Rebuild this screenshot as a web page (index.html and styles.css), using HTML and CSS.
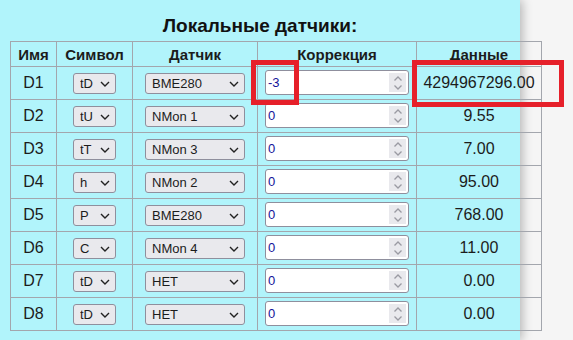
FILE: index.html
```html
<!DOCTYPE html>
<html>

<head>
    <title>Локальные датчики</title>
    <meta charset="utf-8">
    <meta name="viewport" content="width=device-width, initial-scale=1">
    <link rel="stylesheet" href="styles.css">
</head>

<body>
    <div class="panel">
        <h3 class="title">Локальные датчики:</h3>
        <table class="sensors">
            <colgroup>
                <col class="c-name">
                <col class="c-sym">
                <col class="c-sensor">
                <col class="c-corr">
                <col class="c-data">
            </colgroup>
            <tr class="head">
                <th>Имя</th>
                <th>Символ</th>
                <th>Датчик</th>
                <th>Коррекция</th>
                <th>Данные</th>
            </tr>
            <tr>
                <td>D1</td>
                <td><select class="sel sel-sym"><option>tD</option></select></td>
                <td><select class="sel sel-sensor"><option>BME280</option></select></td>
                <td><span class="num"><input type="text" value="-3"><span class="spin"><svg width="10" height="16" viewBox="0 0 10 16"><path d="M1.5 5.5 5 2 8.5 5.5M1.5 10.5 5 14 8.5 10.5" fill="none" stroke="#9a9aa2" stroke-width="1.3"/></svg></span></span></td>
                <td>4294967296.00</td>
            </tr>
            <tr>
                <td>D2</td>
                <td><select class="sel sel-sym"><option>tU</option></select></td>
                <td><select class="sel sel-sensor"><option>NMon 1</option></select></td>
                <td><span class="num"><input type="text" value="0"><span class="spin"><svg width="10" height="16" viewBox="0 0 10 16"><path d="M1.5 5.5 5 2 8.5 5.5M1.5 10.5 5 14 8.5 10.5" fill="none" stroke="#9a9aa2" stroke-width="1.3"/></svg></span></span></td>
                <td>9.55</td>
            </tr>
            <tr>
                <td>D3</td>
                <td><select class="sel sel-sym"><option>tT</option></select></td>
                <td><select class="sel sel-sensor"><option>NMon 3</option></select></td>
                <td><span class="num"><input type="text" value="0"><span class="spin"><svg width="10" height="16" viewBox="0 0 10 16"><path d="M1.5 5.5 5 2 8.5 5.5M1.5 10.5 5 14 8.5 10.5" fill="none" stroke="#9a9aa2" stroke-width="1.3"/></svg></span></span></td>
                <td>7.00</td>
            </tr>
            <tr>
                <td>D4</td>
                <td><select class="sel sel-sym"><option>h</option></select></td>
                <td><select class="sel sel-sensor"><option>NMon 2</option></select></td>
                <td><span class="num"><input type="text" value="0"><span class="spin"><svg width="10" height="16" viewBox="0 0 10 16"><path d="M1.5 5.5 5 2 8.5 5.5M1.5 10.5 5 14 8.5 10.5" fill="none" stroke="#9a9aa2" stroke-width="1.3"/></svg></span></span></td>
                <td>95.00</td>
            </tr>
            <tr>
                <td>D5</td>
                <td><select class="sel sel-sym"><option>P</option></select></td>
                <td><select class="sel sel-sensor"><option>BME280</option></select></td>
                <td><span class="num"><input type="text" value="0"><span class="spin"><svg width="10" height="16" viewBox="0 0 10 16"><path d="M1.5 5.5 5 2 8.5 5.5M1.5 10.5 5 14 8.5 10.5" fill="none" stroke="#9a9aa2" stroke-width="1.3"/></svg></span></span></td>
                <td>768.00</td>
            </tr>
            <tr>
                <td>D6</td>
                <td><select class="sel sel-sym"><option>C</option></select></td>
                <td><select class="sel sel-sensor"><option>NMon 4</option></select></td>
                <td><span class="num"><input type="text" value="0"><span class="spin"><svg width="10" height="16" viewBox="0 0 10 16"><path d="M1.5 5.5 5 2 8.5 5.5M1.5 10.5 5 14 8.5 10.5" fill="none" stroke="#9a9aa2" stroke-width="1.3"/></svg></span></span></td>
                <td>11.00</td>
            </tr>
            <tr>
                <td>D7</td>
                <td><select class="sel sel-sym"><option>tD</option></select></td>
                <td><select class="sel sel-sensor"><option>HET</option></select></td>
                <td><span class="num"><input type="text" value="0"><span class="spin"><svg width="10" height="16" viewBox="0 0 10 16"><path d="M1.5 5.5 5 2 8.5 5.5M1.5 10.5 5 14 8.5 10.5" fill="none" stroke="#9a9aa2" stroke-width="1.3"/></svg></span></span></td>
                <td>0.00</td>
            </tr>
            <tr>
                <td>D8</td>
                <td><select class="sel sel-sym"><option>tD</option></select></td>
                <td><select class="sel sel-sensor"><option>HET</option></select></td>
                <td><span class="num"><input type="text" value="0"><span class="spin"><svg width="10" height="16" viewBox="0 0 10 16"><path d="M1.5 5.5 5 2 8.5 5.5M1.5 10.5 5 14 8.5 10.5" fill="none" stroke="#9a9aa2" stroke-width="1.3"/></svg></span></span></td>
                <td>0.00</td>
            </tr>
        </table>
    </div>
    <!-- annotation frames -->
    <div class="mark mark-corr"></div>
    <div class="mark mark-data"></div>
</body>

</html>
```

FILE: styles.css
```css
body,
html {
    font-family: 'Liberation Sans', Arial, sans-serif;
    margin: 0;
    padding: 0;
    background-color: #f5f5f5;
}

.panel {
    width: 510px;
    height: 325px;
    padding: 15px 0 0 10px;
    background-color: #b1f4fb;
    box-shadow: 2px 0 10px rgba(0, 0, 0, 0.28);
}

.title {
    margin: 0 0 4px -10px;
    font-size: 19px;
    line-height: 22px;
    font-weight: bold;
    text-align: center;
    color: #111111;
}

.sensors {
    width: 532px;
    border-collapse: collapse;
    table-layout: fixed;
    color: #1c1c1c;
}

.sensors .c-name { width: 46px; }
.sensors .c-sym { width: 76px; }
.sensors .c-sensor { width: 125px; }
.sensors .c-corr { width: 159px; }
.sensors .c-data { width: 125px; }

.sensors th,
.sensors td {
    border: 1px solid #a3a6ad;
    padding: 0;
    text-align: center;
    vertical-align: middle;
}

.sensors th {
    height: 24px;
    font-size: 15px;
    font-weight: bold;
}

.sensors td {
    height: 32px;
    font-size: 16px;
}

.sel {
    -webkit-appearance: none;
    appearance: none;
    display: block;
    margin: 1px auto 0;
    height: 21px;
    padding: 0 0 0 6px;
    border: 1px solid #8f8f9d;
    border-radius: 3px;
    font-family: 'Liberation Sans', Arial, sans-serif;
    font-size: 13px;
    color: #1c1c1c;
    background-color: #e9e9ed;
    background-image: url("data:image/svg+xml,%3Csvg xmlns='http://www.w3.org/2000/svg' width='10' height='6' viewBox='0 0 10 6'%3E%3Cpath d='M1 1l4 4 4-4' fill='none' stroke='%23222' stroke-width='1.4'/%3E%3C/svg%3E");
    background-repeat: no-repeat;
    background-position: right 5px center;
}

.sel-sym {
    width: 43px;
}

.sel-sensor {
    width: 100px;
}

.num {
    display: flex;
    align-items: center;
    width: 140px;
    height: 23px;
    margin: 0 auto 1px;
    padding: 0 2px 0 0;
    border: 1px solid #8f8f9d;
    border-radius: 3px;
    background-color: #ffffff;
}

.num input {
    flex: 1;
    min-width: 0;
    border: none;
    outline: none;
    padding: 0 0 0 2px;
    font-family: 'Liberation Sans', Arial, sans-serif;
    font-size: 13px;
    color: #14149a;
    background: transparent;
}

.spin {
    display: flex;
    align-items: center;
    justify-content: center;
    width: 17px;
    height: 19px;
    background-color: #e9e9ed;
}

.mark {
    position: absolute;
    border: 5px solid #e6202a;
}

.mark-corr {
    left: 251px;
    top: 60px;
    width: 38px;
    height: 35px;
}

.mark-data {
    left: 412px;
    top: 60px;
    width: 142px;
    height: 37px;
}
```
